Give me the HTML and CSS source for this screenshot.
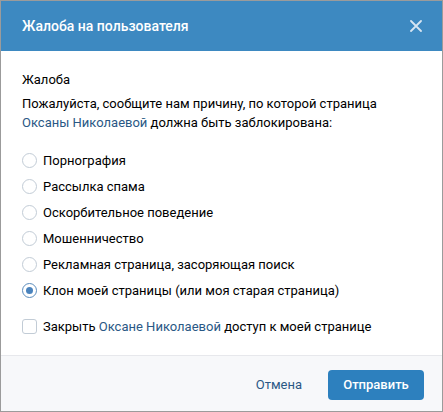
FILE: index.html
```html
<!DOCTYPE html>
<html lang="ru">
<head>
    <meta charset="UTF-8">
    <meta name="viewport" content="width=device-width, initial-scale=1.0">
    <title>Жалоба на пользователя</title>
    <link rel="stylesheet" href="styles.css">
</head>
<body>
<div class="modal">
    <div class="modal-header">
        <span class="modal-title">Жалоба на пользователя</span>
        <span class="close">
            <svg width="12" height="12" viewBox="0 0 12 12">
                <path d="M1 1 L11 11 M11 1 L1 11" stroke="#d6e5f2" stroke-width="1.8" stroke-linecap="round"/>
            </svg>
        </span>
    </div>

    <div class="modal-body">
        <div class="section-title">Жалоба</div>
        <p class="reason-text">
            Пожалуйста, сообщите нам причину, по которой страница
            <a href="#" class="link">Оксаны Николаевой</a> должна быть заблокирована:
        </p>

        <div class="reasons">
            <label class="radio-row"><span class="radio"></span>Порнография</label>
            <label class="radio-row"><span class="radio"></span>Рассылка спама</label>
            <label class="radio-row"><span class="radio"></span>Оскорбительное поведение</label>
            <label class="radio-row"><span class="radio"></span>Мошенничество</label>
            <label class="radio-row"><span class="radio"></span>Рекламная страница, засоряющая поиск</label>
            <label class="radio-row"><span class="radio checked"></span>Клон моей страницы (или моя старая страница)</label>
        </div>

        <label class="check-row">
            <span class="checkbox"></span>
            <span>Закрыть <a href="#" class="link">Оксане Николаевой</a> доступ к моей странице</span>
        </label>
    </div>

    <div class="modal-footer">
        <button class="btn-cancel">Отмена</button>
        <button class="btn-send">Отправить</button>
    </div>
</div>
</body>
</html>
```

FILE: styles.css
```css
* {
    box-sizing: border-box;
}

body {
    margin: 0;
    font-family: Roboto, "Liberation Sans", sans-serif;
    font-size: 13px;
    color: #000;
}

.modal {
    width: 443px;
    height: 412px;
    border: 1px solid #9b9b9b;
    display: flex;
    flex-direction: column;
    background-color: #fff;
}

/* Header */
.modal-header {
    height: 50px;
    flex-shrink: 0;
    background-color: #3d89c1;
    display: flex;
    align-items: center;
    justify-content: space-between;
    padding: 0 20px 0 21px;
}

.modal-title {
    color: #fff;
    font-size: 14px;
    font-weight: 500;
}

.close {
    display: flex;
    width: 12px;
    height: 12px;
    cursor: pointer;
}

/* Body */
.modal-body {
    flex: 1;
    padding: 20px 21px 0 21px;
}

.section-title {
    line-height: 18px;
    margin-bottom: 5px;
}

.reason-text {
    margin: 0;
    line-height: 19px;
}

.link {
    color: #2a5885;
    text-decoration: none;
}

.reasons {
    margin-top: 15px;
}

.radio-row,
.check-row {
    display: flex;
    align-items: center;
    height: 26px;
    cursor: pointer;
}

.radio {
    width: 15px;
    height: 15px;
    border: 1px solid #c2ccd6;
    border-radius: 50%;
    margin-right: 6px;
    flex-shrink: 0;
    display: flex;
    align-items: center;
    justify-content: center;
}

.radio.checked {
    border-color: #5c8dbd;
}

.radio.checked::after {
    content: "";
    width: 7px;
    height: 7px;
    border-radius: 50%;
    background-color: #4a83bd;
}

.check-row {
    margin-top: 10px;
}

.checkbox {
    width: 15px;
    height: 15px;
    border: 1px solid #c2ccd6;
    border-radius: 3px;
    margin-right: 6px;
    flex-shrink: 0;
}

/* Footer */
.modal-footer {
    height: 56px;
    flex-shrink: 0;
    background-color: #f7f8fa;
    border-top: 1px solid #e7e8ec;
    display: flex;
    align-items: center;
    justify-content: flex-end;
    padding: 2px 18px 0 0;
    gap: 10px;
}

.btn-cancel,
.btn-send {
    font-family: inherit;
    font-size: 13px;
    border: none;
    cursor: pointer;
    height: 30px;
}

.btn-cancel {
    background: none;
    color: #2a5885;
    padding: 0 16px;
}

.btn-send {
    width: 96px;
    background-color: #2d80be;
    color: #fff;
    font-weight: 500;
    border-radius: 4px;
}
```
